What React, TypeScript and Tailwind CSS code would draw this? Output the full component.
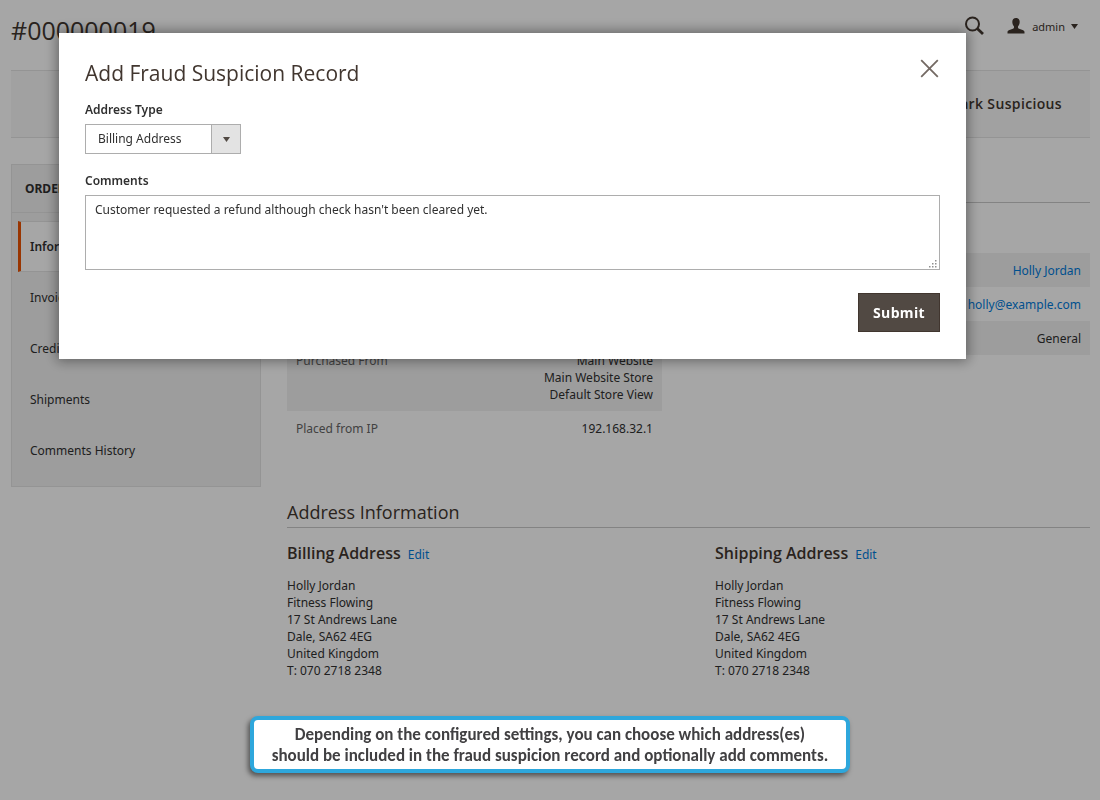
import { useState } from "react";

const NAV_ITEMS = ["Information", "Invoices", "Credit Memos", "Shipments", "Comments History"];

const ADDRESS_LINES = [
  "Holly Jordan",
  "Fitness Flowing",
  "17 St Andrews Lane",
  "Dale, SA62 4EG",
  "United Kingdom",
  "T: 070 2718 2348",
];

function SearchIcon() {
  return (
    <svg width="20" height="20" viewBox="0 0 20 20" fill="none" stroke="#41362f" aria-hidden="true">
      <circle cx="7.5" cy="8" r="6.500" strokeWidth="2" />
      <path d="M12.200 12.500 18 18" strokeWidth="2.8" />
    </svg>
  );
}

function UserIcon() {
  return (
    <svg width="18" height="16" viewBox="0 0 18 16" fill="#41362f" aria-hidden="true">
      <path d="M9 0C6.700 0 5.300 1.400 5.300 3.700c0 2.200.8 3.600 1.600 4.600.3 1.400 0 2-1 2.400L2.400 12C.9 12.600.5 13.200.5 14.300v1.200h17v-1.200c0-1.100-.4-1.700-1.900-2.300l-3.500-1.300c-1-.4-1.300-1-1-2.400.8-1 1.600-2.400 1.600-4.600C12.700 1.400 11.300 0 9 0z" />
    </svg>
  );
}

function Caret({ className }: { className?: string }) {
  return (
    <svg width="7" height="5" viewBox="0 0 7 5" fill="currentColor" className={className} aria-hidden="true">
      <path d="M0 0h7L3.500 5z" />
    </svg>
  );
}

function AddressCard({ title }: { title: string }) {
  return (
    <div>
      <div className="flex items-baseline gap-[7px]">
        <h3 className="font-['Open_Sans',sans-serif] text-base leading-6 font-semibold text-[#41362f]">{title}</h3>
        <a href="#" className="text-[#007bdb]">Edit</a>
      </div>
      <address className="mt-3 not-italic">
        {ADDRESS_LINES.map((line) => (
          <div key={line}>{line}</div>
        ))}
      </address>
    </div>
  );
}

function OrderPage() {
  return (
    <div className="pr-[10px] pl-[11px]">
      <header className="flex h-[70px] items-start justify-between">
        <h1 className="mt-3 font-['Open_Sans',sans-serif] text-[25px] leading-9 text-[#41362f]">#000000019</h1>
        <div className="mt-4 mr-3 flex items-center">
          <button type="button" aria-label="Search">
            <SearchIcon />
          </button>
          <button type="button" className="ml-[22px] flex items-center text-[11px] text-[#41362f]">
            <UserIcon />
            <span className="ml-[7px]">admin</span>
            <Caret className="ml-[6px]" />
          </button>
        </div>
      </header>

      <div className="flex h-[68px] items-center justify-end border-y border-[#e3e3e3] bg-[#f8f8f8] pr-7">
        <button type="button" className="font-['Open_Sans',sans-serif] text-sm font-semibold tracking-wide text-[#41362f]">
          Mark Suspicious
        </button>
      </div>

      <div className="mt-[26px] flex items-start gap-[26px]">
        <nav className="w-[250px] shrink-0 border border-[#e3e3e3] bg-[#f1f1f1] pb-[10px]">
          <div className="flex h-[48px] items-center border-b border-[#e3e3e3] pl-[13px] font-bold">ORDER VIEW</div>
          <ul className="mt-2">
            {NAV_ITEMS.map((item, i) => (
              <li key={item}>
                <a
                  href="#"
                  className={
                    i === 0
                      ? "ml-[6px] flex h-[51px] items-center border-y border-l-[3px] border-y-[#e3e3e3] border-l-[#eb5202] bg-white pl-[9px] font-semibold"
                      : "flex h-[51px] items-center pl-[18px]"
                  }
                >
                  {item}
                </a>
              </li>
            ))}
          </ul>
        </nav>

        <main className="min-w-0 flex-1">
          <div className="h-[39px] border-b border-[#cacaca]" />
          <div className="grid grid-cols-2 gap-x-[53px]">
            <table className="mt-[140px] h-[102px] w-full">
              <tbody>
                <tr className="bg-[#f1f1f1] align-top">
                  <th scope="row" className="px-[9px] pt-[9px] pb-2 text-left font-normal text-[#666]">Purchased From</th>
                  <td className="px-[9px] pt-[9px] pb-2 text-right">
                    Main Website
                    <br />
                    Main Website Store
                    <br />
                    Default Store View
                  </td>
                </tr>
                <tr className="align-top">
                  <th scope="row" className="px-[9px] pt-[9px] pb-2 text-left font-normal text-[#666]">Placed from IP</th>
                  <td className="px-[9px] pt-[9px] pb-2 text-right">192.168.32.1</td>
                </tr>
              </tbody>
            </table>
            <ul className="mt-[50px] self-start text-right">
              <li className="bg-[#f1f1f1] px-[9px] pt-[9px] pb-2">
                <a href="#" className="text-[#007bdb]">Holly Jordan</a>
              </li>
              <li className="px-[9px] pt-[9px] pb-2">
                <a href="#" className="text-[#007bdb]">holly@example.com</a>
              </li>
              <li className="bg-[#f1f1f1] px-[9px] pt-[9px] pb-2">General</li>
            </ul>
          </div>

          <h2 className="mt-[55px] border-b border-[#cacaca] pb-[3px] font-['Open_Sans',sans-serif] text-lg leading-6 text-[#41362f]">
            Address Information
          </h2>
          <div className="mt-[13px] grid grid-cols-2 gap-x-[53px]">
            <AddressCard title="Billing Address" />
            <AddressCard title="Shipping Address" />
          </div>
        </main>
      </div>
    </div>
  );
}

function FraudModal() {
  const [type, setType] = useState("billing");
  const [comments, setComments] = useState("Customer requested a refund although check hasn't been cleared yet.");

  return (
    <div className="fixed inset-0 bg-black/35 pt-[33px] pr-[134px] pl-[59px]">
      <form
        role="dialog"
        aria-labelledby="fraud-title"
        onSubmit={(e) => e.preventDefault()}
        className="bg-white px-[26px] pt-6 pb-[27px] shadow-[0_0_12px_2px_rgba(0,0,0,0.4)]"
      >
        <div className="flex items-start justify-between">
          <h2 id="fraud-title" className="font-['Open_Sans',sans-serif] text-[21px] leading-8 text-[#41362f]">
            Add Fraud Suspicion Record
          </h2>
          <button type="button" aria-label="Close" className="mt-[2px] mr-[1px]">
            <svg width="19" height="19" viewBox="0 0 19 19" fill="none" stroke="#736963" strokeWidth="1.8">
              <path d="M1.200 1.200 17.800 17.800M17.800 1.200 1.200 17.800" />
            </svg>
          </button>
        </div>

        <label htmlFor="address-type" className="mt-3 block font-semibold">Address Type</label>
        <div className="relative mt-[6px] w-[156px]">
          <select
            id="address-type"
            value={type}
            onChange={(e) => setType(e.target.value)}
            className="block h-[30px] w-full appearance-none border border-[#adadad] bg-white pr-8 pb-px pl-3 text-[#303030]"
          >
            <option value="billing">Billing Address</option>
          </select>
          <span className="pointer-events-none absolute inset-y-0 right-0 flex w-[30px] items-center justify-center border border-[#adadad] bg-[#e3e3e3] text-[#514943]">
            <Caret />
          </span>
        </div>

        <label htmlFor="comments" className="mt-[18px] block font-semibold">Comments</label>
        <div className="relative mt-[6px]">
          <textarea
            id="comments"
            value={comments}
            onChange={(e) => setComments(e.target.value)}
            className="block h-[75px] w-full resize-none border border-[#adadad] bg-white px-[9px] py-[5px]"
          />
          <svg width="8" height="8" viewBox="0 0 8 8" fill="#909090" className="pointer-events-none absolute right-[3px] bottom-[2px]" aria-hidden="true">
            <path d="M6 0h1.500v1.500H6zM3 3h1.500v1.500H3zM6 3h1.500v1.500H6zM0 6h1.500v1.500H0zM3 6h1.500v1.500H3zM6 6h1.500v1.500H6z" />
          </svg>
        </div>

        <div className="mt-[23px] flex justify-end">
          <button type="submit" className="h-[39px] border border-[#41362f] bg-[#514943] px-[14px] font-['Open_Sans',sans-serif] text-sm font-bold tracking-wide text-white">
            Submit
          </button>
        </div>
      </form>
    </div>
  );
}

export default function App() {
  return (
    <div className="min-h-screen bg-white font-['Noto_Sans',sans-serif] text-xs leading-[17px] text-[#303030]">
      <OrderPage />
      <FraudModal />
      <div className="fixed inset-x-0 bottom-[27px] flex justify-center">
        <p className="rounded-lg border-4 border-[#2ea7dc] bg-white px-[18px] pt-1 pb-[3px] text-center font-['Carlito','Lato',sans-serif] text-[17px] leading-[21px] font-bold text-[#414042] shadow-[-2px_3px_5px_rgba(0,0,0,0.5)]">
          Depending on the configured settings, you can choose which address(es)
          <br />
          should be included in the fraud suspicion record and optionally add comments.
        </p>
      </div>
    </div>
  );
}
